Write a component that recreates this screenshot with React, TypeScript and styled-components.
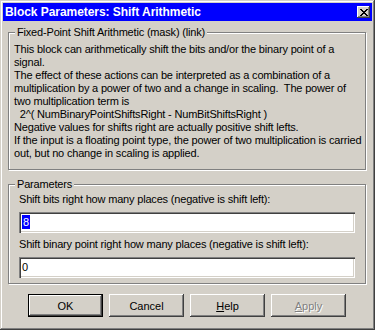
import React from "react";
import styled, { createGlobalStyle } from "styled-components";

const GlobalStyle = createGlobalStyle`
  html, body {
    margin: 0;
    padding: 0;
    background: #d4d0c8;
  }
  * {
    box-sizing: border-box;
  }
`;

const descriptionLines = [
  "This block can arithmetically shift the bits and/or the binary point of a",
  "signal.",
  "The effect of these actions can be interpreted as a combination of a",
  "multiplication by a power of two and a change in scaling.  The power of",
  "two multiplication term is",
  "  2^( NumBinaryPointShiftsRight - NumBitShiftsRight )",
  "Negative values for shifts right are actually positive shift lefts.",
  "If the input is a floating point type, the power of two multiplication is carried",
  "out, but no change in scaling is applied.",
];

const App = () => {
  return (
    <>
      <GlobalStyle />
      <Window>
        <TitleBar>
          <TitleText>Block Parameters: Shift Arithmetic</TitleText>
          <CloseButton aria-label="Close">
            <svg width="8" height="7" viewBox="0 0 8 7">
              <path d="M0 0h2v1h1v1h2V1h1V0h2v1H7v1H6v1H5v1h1v1h1v1h1v1H6V6H5V5H3v1H2v1H0V6h1V5h1V4h1V3H2V2H1V1H0z" fill="#000" />
            </svg>
          </CloseButton>
        </TitleBar>

        <Body>
          <GroupBox $top={11}>
            <GroupCaption>Fixed-Point Shift Arithmetic (mask) (link)</GroupCaption>
            <Description>
              {descriptionLines.map((line, i) => (
                <Line key={i}>{line}</Line>
              ))}
            </Description>
          </GroupBox>

          <GroupBox $top={14}>
            <GroupCaption>Parameters</GroupCaption>
            <Params>
              <FieldLabel>Shift bits right how many places (negative is shift left):</FieldLabel>
              <EditBox>
                <Selected>8</Selected>
              </EditBox>
              <FieldLabel>Shift binary point right how many places (negative is shift left):</FieldLabel>
              <EditBox>0</EditBox>
            </Params>
          </GroupBox>

          <ButtonRow>
            <Button $default>OK</Button>
            <Button>Cancel</Button>
            <Button>
              <u>H</u>elp
            </Button>
            <Button disabled>
              <u>A</u>pply
            </Button>
          </ButtonRow>
        </Body>
      </Window>
    </>
  );
};

export default App;

const Window = styled.div`
  width: 375px;
  height: 330px;
  padding: 3px;
  background: #d4d0c8;
  box-shadow: inset -1px -1px #404040, inset 1px 1px #d4d0c8,
    inset -2px -2px #808080, inset 2px 2px #ffffff;
  display: flex;
  flex-direction: column;
  font-family: "Liberation Sans", Arial, sans-serif;
  font-size: 11px;
  letter-spacing: -0.18px;
  color: #000;
`;

const TitleBar = styled.div`
  height: 18px;
  background: #0000ff;
  display: flex;
  align-items: center;
  justify-content: space-between;
  padding: 0 2px 0 2px;
`;

const TitleText = styled.span`
  color: #fff;
  font-weight: bold;
  font-size: 12px;
  letter-spacing: -0.05px;
  white-space: nowrap;
`;

const CloseButton = styled.div`
  width: 13px;
  height: 12px;
  background: #d4d0c8;
  display: flex;
  align-items: center;
  justify-content: center;
  box-shadow: inset -1px -1px #404040, inset 1px 1px #ffffff,
    inset -2px -2px #808080;
`;

const Body = styled.div`
  flex: 1;
  display: flex;
  flex-direction: column;
  padding: 0 6px 0 5px;
`;

const GroupBox = styled.div<{ $top: number }>`
  position: relative;
  margin-top: ${(p) => p.$top}px;
  border: 1px solid #808080;
  box-shadow: inset 1px 1px #ffffff, 1px 1px #ffffff;
`;

const GroupCaption = styled.span`
  position: absolute;
  top: -7px;
  left: 6px;
  padding: 0 2px;
  line-height: 13px;
  background: #d4d0c8;
  white-space: nowrap;
`;

const Description = styled.div`
  padding: 10px 4px 9px 5px;
`;

const Line = styled.div`
  height: 13px;
  line-height: 13px;
  white-space: pre;
`;

const Params = styled.div`
  display: flex;
  flex-direction: column;
  padding: 8px 10px 5px 10px;
`;

const FieldLabel = styled.div`
  line-height: 13px;
  white-space: nowrap;
  &:not(:first-child) {
    margin-top: 5px;
  }
`;

const EditBox = styled.div`
  margin-top: 6px;
  height: 21px;
  background: #fff;
  padding: 3px 3px 0 3px;
  line-height: 14px;
  box-shadow: inset 1px 1px #808080, inset 2px 2px #404040,
    inset -1px -1px #ffffff, inset -2px -2px #d4d0c8;
`;

const Selected = styled.span`
  display: inline-block;
  background: #0000ff;
  color: #fff;
  padding: 0 1px;
`;

const ButtonRow = styled.div`
  display: flex;
  justify-content: center;
  gap: 6px;
  margin-top: 10px;
`;

const Button = styled.button<{ $default?: boolean }>`
  width: 75px;
  height: 23px;
  padding: 0;
  background: #d4d0c8;
  font-family: "Liberation Sans", Arial, sans-serif;
  font-size: 11px;
  color: #000;
  border: ${(p) => (p.$default ? "1px solid #000" : "none")};
  box-shadow: inset -1px -1px #404040, inset 1px 1px #ffffff,
    inset -2px -2px #808080, inset 2px 2px #d4d0c8;

  &:disabled {
    color: #808080;
    text-shadow: 1px 1px #ffffff;
  }
`;
